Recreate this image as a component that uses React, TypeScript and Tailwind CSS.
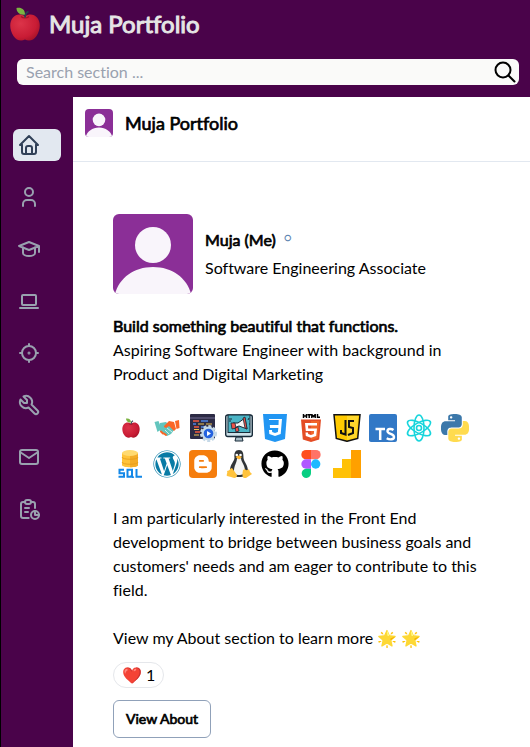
import type { ReactNode } from "react";
import {
  TbHome,
  TbUser,
  TbSchool,
  TbDeviceLaptop,
  TbFocus2,
  TbTool,
  TbMail,
  TbReport,
} from "react-icons/tb";
import { FaGithub, FaWordpress, FaBloggerB } from "react-icons/fa";

const navItems = [
  { label: "Home", Icon: TbHome },
  { label: "About", Icon: TbUser },
  { label: "Education", Icon: TbSchool },
  { label: "Projects", Icon: TbDeviceLaptop },
  { label: "Goals", Icon: TbFocus2 },
  { label: "Skills", Icon: TbTool },
  { label: "Contact", Icon: TbMail },
  { label: "Resume", Icon: TbReport },
];

function Avatar({ className }: { className: string }) {
  return (
    <svg viewBox="0 0 80 80" className={className} aria-hidden="true">
      <rect width="80" height="80" fill="#8b2f97" />
      <circle cx="40" cy="31" r="18" fill="#f9f5fb" />
      <path d="M2 80C6 64 21 53 40 53s34 11 38 27z" fill="#f9f5fb" />
    </svg>
  );
}

function Svg({ children, box = "0 0 28 28" }: { children: ReactNode; box?: string }) {
  return (
    <svg viewBox={box} className="size-7" aria-hidden="true">
      {children}
    </svg>
  );
}

function Apple({ className }: { className: string }) {
  return (
    <svg viewBox="0 0 32 34" className={className} aria-hidden="true">
      <defs>
        <radialGradient id="appleSkin" cx="35%" cy="35%" r="75%">
          <stop offset="0" stopColor="#dc3449" />
          <stop offset="0.7" stopColor="#c91c35" />
          <stop offset="1" stopColor="#a51228" />
        </radialGradient>
      </defs>
      <path
        d="M16 9.500C12 6.500 7 7 4 10.500C0 15 .5 23 4.500 29C7.500 33.500 12 34.500 16 32.500C20 34.500 24.500 33.500 27.500 29C31.500 23 32 15 28 10.500C25 7 20 6.500 16 9.500Z"
        fill="url(#appleSkin)"
      />
      <path d="M12 9.500c2 2 6 2 8 0" stroke="#a51228" strokeWidth="1.200" fill="none" />
      <path d="M16 10.500c0-3 1-5 3.500-6" stroke="#29434e" strokeWidth="1.800" fill="none" />
      <path d="M16 7.500C11 8.500 7.500 5.500 7.500 1C12 0 16 2 16 7.500Z" fill="#7cb342" />
    </svg>
  );
}

const tech: { name: string; art: ReactNode }[] = [
  {
    name: "Apple",
    art: (
      <span className="flex size-7 items-center justify-center">
        <Apple className="h-5 w-5" />
      </span>
    ),
  },
  {
    name: "Handshake",
    art: (
      <Svg>
        <path d="M1.500 8l4-1 3 8-4 3z" fill="#63c5bd" />
        <path d="M22 7l4-1 .500 8-3 1z" fill="#fa6625" />
        <path d="M7 9l6-1 8 8-3 4-4 2-8-6z" fill="#63c5bd" />
        <path d="M11 12l5-5 5 1 2 7-2 2-5-5-3 2-2-1z" fill="#fa6625" />
        <path d="M8 17.500l2 2M11 19.500l2 1.500" stroke="#fa6625" strokeWidth="2" strokeLinecap="round" fill="none" />
        <path d="M14 14l5 4M12 16l4 4" stroke="#fff" strokeWidth="0.700" />
      </Svg>
    ),
  },
  {
    name: "Coding",
    art: (
      <Svg>
        <rect x="1" y="0" width="25" height="25" rx="1" fill="#2c2b45" />
        <path d="M1 4h25" stroke="#736f94" />
        <path d="M4 7h6M5 13h5M6 18h5" stroke="#f05b42" strokeWidth="1.500" />
        <path d="M12 7h7M12 13h3M4 10h3" stroke="#4d83e5" strokeWidth="1.500" />
        <path d="M9 10h6M17 10h6M5 21h5M5 15.500h5" stroke="#f0c451" strokeWidth="1.200" />
        <circle cx="19.500" cy="19.500" r="7.500" fill="none" stroke="#c5d9e8" strokeWidth="2" strokeDasharray="3 2" />
        <circle cx="19.500" cy="19.500" r="7" fill="#c5d9e8" />
        <circle cx="19.500" cy="19.500" r="4.800" fill="#2462df" />
        <path d="M18 17l4 2.500-4 2.500z" fill="#fff" />
      </Svg>
    ),
  },
  {
    name: "Digital marketing",
    art: (
      <Svg>
        <path d="M11 23h6l1 4h-8z" fill="#a9bdc7" stroke="#182b39" />
        <rect x="0.700" y="1" width="26.600" height="21.500" rx="2" fill="#cde1e8" stroke="#182b39" strokeWidth="1.400" />
        <rect x="3" y="1" width="22" height="17.500" fill="#4bb5c6" stroke="#182b39" />
        <path d="M8 9l5 0 7-5 2 11-8-3-5 2z" fill="#f5f5f5" stroke="#182b39" />
        <path d="M6 9l4 0 1 5-4 1zM18 4l2-1 2 12-2-1zM10 14l3-1 1 4-3 1z" fill="#ef5248" stroke="#182b39" strokeWidth="0.800" />
        <path d="M23 6l1-2M24 10h1M4 5h3M4 7h2" stroke="#182b39" />
      </Svg>
    ),
  },
  {
    name: "CSS",
    art: (
      <Svg>
        <path d="M2 0h24l-2 25-10 3-10-3z" fill="#2196f3" />
        <path d="M8 5h13l-1.300 15-5.700 2-5.700-2-.3-4h3l.2 2 2.800 1 2.900-1 .4-4H9l-.2-3h8.700l.2-5H8z" fill="#fff" />
      </Svg>
    ),
  },
  {
    name: "HTML",
    art: (
      <Svg>
        <path d="M6.500 0v4M9.500 0v4M6.500 2h3M10.500 .8h3.500M12.200 .5V4M14.800 4V.5L16.500 2.500 18.200 .5V4M20.500 0v3.200h2.500" stroke="#000" strokeWidth="1.500" fill="none" />
        <path d="M4 5.500h20l-1.800 20L14 28l-8.200-2.500z" fill="#e44d26" />
        <path d="M14 7h8.300l-1.600 17-6.700 2z" fill="#f16529" />
        <path d="M8 9h12v2.500h-9l.2 3H20l-.8 7.500-5.200 1.700L8.800 22l-.3-3.500H11l.2 1.500 2.800 1 2.800-1 .3-3H8.800z" fill="#fff" />
      </Svg>
    ),
  },
  {
    name: "JavaScript",
    art: (
      <Svg>
        <path d="M1 .7h26l-2.300 23.800L14 27.300 3.300 24.500z" fill="#ffca00" stroke="#111" strokeWidth="1.500" />
        <path d="M14 2v24l9.300-2.700L25.300 2z" fill="#ffd82d" />
        <path d="M12.500 6v14.500l-4.500-1.500v-3M21 7h-5v6l4 1v5l-5 2" fill="none" stroke="#111" strokeWidth="2" />
      </Svg>
    ),
  },
  {
    name: "TypeScript",
    art: (
      <Svg>
        <rect width="28" height="28" rx="2" fill="#3178c6" />
        <path d="M6.500 15H16M11.200 15v11" stroke="#fff" strokeWidth="2.500" fill="none" />
        <path d="M24.500 16c-2-1.500-6-1.500-6 1.200 0 3 6.500 2.500 6.500 5.700 0 3-4.500 3-7.300 1.300" stroke="#fff" strokeWidth="2.400" fill="none" />
      </Svg>
    ),
  },
  {
    name: "React",
    art: (
      <Svg>
        <g fill="none" stroke="#18d5dc" strokeWidth="1.600">
          <ellipse cx="14" cy="14" rx="13" ry="5" transform="rotate(30 14 14)" />
          <ellipse cx="14" cy="14" rx="13" ry="5" transform="rotate(90 14 14)" />
          <ellipse cx="14" cy="14" rx="13" ry="5" transform="rotate(150 14 14)" />
          <circle cx="14" cy="14" r="2.500" />
        </g>
      </Svg>
    ),
  },
  {
    name: "Python",
    art: (
      <Svg box="0 0 24 24">
        <path fill="#3c78aa" d="M14.250.18l.9.2.73.26.59.3.45.32.34.34.25.34.16.33.1.3.04.26.02.2-.01.13V8.500l-.05.63-.13.55-.21.46-.26.38-.3.31-.33.25-.35.19-.35.14-.33.1-.3.07-.26.04-.21.02H8.770l-.69.05-.59.14-.5.22-.41.27-.33.32-.27.35-.2.36-.15.37-.1.35-.07.32-.04.27-.02.21v3.060H3.170l-.21-.03-.28-.07-.32-.12-.35-.18-.36-.26-.36-.36-.35-.46-.32-.59-.28-.73-.21-.88-.14-1.050-.05-1.230.06-1.220.16-1.040.24-.87.32-.71.36-.57.4-.44.42-.33.42-.24.4-.16.36-.1.32-.05.24-.01h.16l.06.01h8.160v-.83H6.180l-.01-2.750-.02-.37.05-.34.11-.31.17-.28.25-.26.31-.23.38-.2.44-.18.51-.15.58-.12.64-.1.71-.06.77-.04.84-.02 1.270.05zm-6.300 1.980l-.23.33-.08.41.08.41.23.34.33.22.41.09.41-.09.33-.22.23-.34.08-.41-.08-.41-.23-.33-.33-.22-.41-.09-.41.09z" />
        <path fill="#ffdb4f" d="M21.100 6.110l.28.06.32.12.35.18.36.27.36.35.35.47.32.59.28.73.21.88.14 1.040.05 1.230-.06 1.230-.16 1.040-.24.86-.32.71-.36.57-.4.45-.42.33-.42.24-.4.16-.36.09-.32.05-.24.02-.16-.01h-8.220v.82h5.840l.01 2.760.02.36-.05.34-.11.31-.17.29-.25.25-.31.24-.38.2-.44.17-.51.15-.58.13-.64.09-.71.07-.77.04-.84.01-1.270-.04-1.070-.14-.9-.2-.73-.25-.59-.3-.45-.33-.34-.34-.25-.34-.16-.33-.1-.3-.04-.25-.02-.2.01-.13v-5.340l.05-.64.13-.54.21-.46.26-.38.3-.32.33-.24.35-.2.35-.14.33-.1.3-.06.26-.04.21-.02.13-.01h5.840l.69-.05.59-.14.5-.21.41-.28.33-.32.27-.35.2-.36.15-.36.1-.35.07-.32.04-.28.02-.21V6.070h2.090l.14.01zm-6.470 14.250l-.23.33-.08.41.08.41.23.33.33.23.41.08.41-.08.33-.23.23-.33.08-.41-.08-.41-.23-.33-.33-.23-.41-.08-.41.08z" />
      </Svg>
    ),
  },
  {
    name: "SQL",
    art: (
      <Svg>
        <path d="M5 3v12c0 3 16 3 16 0V3z" fill="#ffc43a" />
        <path d="M13 3v14.300c5 0 8-1 8-2.300V3z" fill="#f4ac27" />
        <ellipse cx="13" cy="3" rx="8" ry="3" fill="#ffda70" />
        <path d="M5 7c0 3 16 3 16 0M5 12c0 3 16 3 16 0" stroke="#e39a1c" fill="none" strokeWidth="0.800" />
        <path d="M7 19.800H2.500v3.500H7v3.500H1.500M10.500 19.800h4.500v7h-4.500zM14 25l2.500 3M19.500 19v7.800H25" stroke="#1388e8" strokeWidth="2" fill="none" />
      </Svg>
    ),
  },
  { name: "WordPress", art: <FaWordpress className="size-7 text-[#087ba5]" aria-hidden="true" /> },
  {
    name: "Blogger",
    art: (
      <span className="flex size-7 items-center justify-center rounded-sm bg-[#f57d0d] text-white">
        <FaBloggerB className="size-5" aria-hidden="true" />
      </span>
    ),
  },
  {
    name: "Linux",
    art: (
      <Svg>
        <path d="M14 0c-4 0-5 3-4.500 8C9 12 5 14 5 21c0 5 4 6 9 6s9-1 9-6c0-6-4-9-4.500-13C18.500 3 18 0 14 0z" fill="#303437" />
        <path d="M12 8c1 1 3 1 4 0 0 4 4 7 4 13 0 3-3 4-6 4s-5-1-5-4c0-6 3-8 3-13z" fill="#f5f5f3" />
        <circle cx="11.800" cy="5" r="1.300" fill="#fff" />
        <circle cx="15.500" cy="5" r="1.300" fill="#fff" />
        <path d="M10.500 7l3-1.500 3.500 1.500-3 2.500z" fill="#ffb62e" />
        <path d="M7 18l5 7c0 4-4 3-6 2l-4-1c-1-1 1-3 0-5 3 0 3-3 5-3zM20 19c1 2 3 1 4 0l1 3 2 2-6 4c-4 1-4-3-3-8z" fill="#ffc33d" />
      </Svg>
    ),
  },
  { name: "GitHub", art: <FaGithub className="size-7 text-black" aria-hidden="true" /> },
  {
    name: "Figma",
    art: (
      <Svg>
        <path d="M14 0H9a4.660 4.660 0 000 9.330h5z" fill="#ff4f1f" />
        <path d="M14 0h5a4.660 4.660 0 010 9.330h-5z" fill="#ff7367" />
        <path d="M14 9.330H9a4.660 4.660 0 000 9.330h5z" fill="#b058ff" />
        <circle cx="18.700" cy="14" r="4.670" fill="#1bb9ff" />
        <path d="M14 18.670H9a4.660 4.660 0 105 4.660z" fill="#08ce82" />
      </Svg>
    ),
  },
  {
    name: "Analytics",
    art: (
      <Svg>
        <path d="M0 18h9V9h10v19H0z" fill="#ffc107" />
        <path d="M18 0h10v28H18z" fill="#ffa000" />
      </Svg>
    ),
  },
];

export default function App() {
  return (
    <div className="flex min-h-screen flex-col border-l border-black bg-[#4a034a] font-['Lato','Noto_Color_Emoji',sans-serif] text-base text-black [font-variant-ligatures:none]">
      <header className="pb-3">
        <div className="flex h-[47px] items-center gap-2 pl-2">
          <Apple className="h-[34px] w-8" />
          <h1 className="text-2xl text-[#e5e5e5] [-webkit-text-stroke:1px_#e5e5e5]">Muja Portfolio</h1>
        </div>
        <form role="search" className="mt-3 mr-[11px] ml-4 flex h-[26px] items-center rounded-md bg-[#fafaf9] pr-0.5 pl-[9px]">
          <input
            type="search"
            aria-label="Search section"
            placeholder="Search section ..."
            className="min-w-0 flex-1 bg-transparent outline-none placeholder:text-gray-400"
          />
          <button type="button" aria-label="Search">
            <svg viewBox="0 0 24 24" className="size-6" fill="none" stroke="#000" strokeWidth="2" aria-hidden="true">
              <circle cx="10" cy="10" r="7.500" />
              <path d="M15.500 15.500l6 6" strokeLinecap="round" />
            </svg>
          </button>
        </form>
      </header>

      <div className="flex flex-1">
        <nav aria-label="Sections" className="flex w-18 shrink-0 flex-col gap-5 px-3 pt-8">
          {navItems.map(({ label, Icon }, i) => (
            <a
              key={label}
              href={"#" + label.toLowerCase()}
              aria-label={label}
              className={
                i === 0
                  ? "flex h-8 items-center rounded-md bg-slate-200 px-1 text-slate-700"
                  : "flex h-8 items-center rounded-md px-1 text-gray-400"
              }
            >
              <Icon className="size-6" />
            </a>
          ))}
        </nav>

        <main className="min-w-0 flex-1 bg-white">
          <div className="flex h-[65px] items-center gap-3 border-b border-slate-200 px-3 pb-3">
            <Avatar className="size-7 rounded" />
            <h2 className="text-lg [-webkit-text-stroke:0.7px_#000]">Muja Portfolio</h2>
          </div>

          <div className="px-10 pt-13">
            <div className="flex items-center gap-3">
              <Avatar className="size-20 rounded-md" />
              <div className="leading-7">
                <div className="flex gap-2">
                  <h3 className="[-webkit-text-stroke:0.7px_#000]">Muja (Me)</h3>
                  <span className="text-xs leading-6 text-[#5b83b0]">○</span>
                </div>
                <p>Software Engineering Associate</p>
              </div>
            </div>

            <p className="mt-5 [-webkit-text-stroke:0.7px_#000]">Build something beautiful that functions.</p>
            <p>Aspiring Software Engineer with background in Product and Digital Marketing</p>

            <ul className="mt-6 flex flex-wrap">
              {tech.map(({ name, art }) => (
                <li key={name} title={name} className="p-1">
                  {art}
                </li>
              ))}
            </ul>

            <p className="mt-6">
              I am particularly interested in the Front End development to bridge between business goals and customers' needs
              and am eager to contribute to this field.
            </p>
            <p className="mt-6">View my About section to learn more 🌟 🌟</p>

            <button type="button" className="mt-3 flex h-[26px] items-center gap-1 rounded-full border border-gray-200 px-2">
              <span>❤️</span>
              <span>1</span>
            </button>
            <button
              type="button"
              className="mt-3 h-[38px] rounded-md border border-slate-400 px-3 text-sm [-webkit-text-stroke:0.7px_#000]"
            >
              View About
            </button>
          </div>
        </main>
      </div>
    </div>
  );
}
